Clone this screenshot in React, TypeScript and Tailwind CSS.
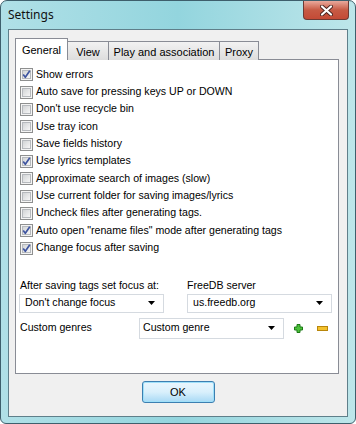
import React from 'react';

const options = [
  { label: 'Show errors', checked: true },
  { label: 'Auto save for pressing keys UP or DOWN' },
  { label: "Don't use recycle bin" },
  { label: 'Use tray icon' },
  { label: 'Save fields history' },
  { label: 'Use lyrics templates', checked: true },
  { label: 'Approximate search of images (slow)' },
  { label: 'Use current folder for saving images/lyrics' },
  { label: 'Uncheck files after generating tags.' },
  { label: 'Auto open "rename files" mode after generating tags', checked: true },
  { label: 'Change focus after saving', checked: true },
];

function CheckBox({ checked }: { checked?: boolean }) {
  return (
    <span className="relative flex h-[13px] w-[13px] shrink-0 items-center justify-center border border-[#8e8f8f] bg-[#f4f4f4]">
      <span className="h-[9px] w-[9px] border border-[#b6b9bd] bg-gradient-to-br from-[#d2d4d6] to-[#f6f6f6]" />
      {checked && (
        <svg className="absolute left-0 top-0" width="11" height="11" viewBox="0 0 11 11">
          <path d="M2.2 5.6 L4.3 8.3 L8.8 1.8" fill="none" stroke="#3f55a0" strokeWidth="1.7" strokeLinejoin="round" />
        </svg>
      )}
    </span>
  );
}

function Arrow() {
  return (
    <svg width="7" height="4" viewBox="0 0 7 4" className="shrink-0">
      <path d="M0 0 H7 L3.5 4 Z" fill="#000" />
    </svg>
  );
}

function Combo({ value, className }: { value: string; className: string }) {
  return (
    <div className={`flex w-[145px] items-center justify-between border border-[#d5dae0] bg-white pr-[8px] ${className}`}>
      <span>{value}</span>
      <Arrow />
    </div>
  );
}

export default function App() {
  const tabs = [
    { label: 'General', w: 'w-[53px]', active: true },
    { label: 'View', w: 'w-[41px]' },
    { label: 'Play and association', w: 'w-[111px]' },
    { label: 'Proxy', w: 'w-[39px]' },
  ];

  return (
    <div className="flex h-[424px] w-[356px] flex-col overflow-hidden rounded-t-[7px] rounded-b-[6px] border border-[#3e5f6c] bg-gradient-to-r from-[#b0e0e7] via-[#93d5de] to-[#bde6ea] font-['Liberation_Sans',Arial,sans-serif] text-[10.6px] text-black">
      {/* Title bar */}
      <div className="relative flex h-[28px] shrink-0 items-center pl-[7px]">
        <span className="font-['Noto_Sans',sans-serif] text-[12px] text-[#111]">Settings</span>
        <div className="absolute right-[6px] top-0 flex h-[19px] w-[46px] items-center justify-center rounded-b-[4px] border border-t-0 border-[#6d3a34] bg-gradient-to-b from-[#e9a99c] via-[#c75a44] to-[#c34a36]">
          <svg width="13" height="11" viewBox="0 0 13 11">
            <path d="M2 1.5 L11 9.5 M11 1.5 L2 9.5" stroke="#4a2520" strokeWidth="4" strokeLinecap="round" />
            <path d="M2 1.5 L11 9.5 M11 1.5 L2 9.5" stroke="#ffffff" strokeWidth="2.2" strokeLinecap="round" />
          </svg>
        </div>
      </div>

      {/* Client area */}
      <div className="mx-[7px] mb-[6px] flex flex-1 flex-col border border-[#5f7f8a] bg-[#f0f0f0] pl-[6px] pt-[8px]">
        <div className="relative z-10 -mb-px flex h-[22px] items-end">
          {tabs.map((t) =>
            t.active ? (
              <div key={t.label} className={`flex h-[22px] ${t.w} justify-center border border-b-0 border-[#898c95] bg-white pt-[3px] text-[11px]`}>
                {t.label}
              </div>
            ) : (
              <div key={t.label} className={`flex h-[19px] ${t.w} justify-center border border-l-0 border-b-0 border-[#898c95] bg-gradient-to-b from-[#f2f2f2] to-[#dddddd] pt-[2px] text-[11px]`}>
                {t.label}
              </div>
            ),
          )}
        </div>

        <div className="flex h-[315px] w-[324px] flex-col border border-[#898c95] bg-white pl-[4px] pt-[6px]">
          {options.map((o) => (
            <div key={o.label} className="flex h-[17.35px] items-center gap-[3px]">
              <CheckBox checked={o.checked} />
              <span>{o.label}</span>
            </div>
          ))}

          <div className="mt-[22px] flex h-[14px] items-center">
            <span className="w-[167px]">After saving tags set focus at:</span>
            <span>FreeDB server</span>
          </div>
          <div className="mt-[1px] flex">
            <Combo value="Don't change focus" className="-ml-px h-[19px] pl-[5px]" />
            <Combo value="us.freedb.org" className="ml-[23px] h-[19px] pl-[5px]" />
          </div>
          <div className="mt-[5px] flex items-center">
            <span className="w-[119px]">Custom genres</span>
            <Combo value="Custom genre" className="h-[21px] pl-[3px]" />
            <svg className="ml-[10px]" width="9" height="9" viewBox="0 0 9 9">
              <path d="M3 0.5 H6 V3 H8.5 V6 H6 V8.5 H3 V6 H0.5 V3 H3 Z" fill="#4cc03a" stroke="#1d7a16" strokeWidth="1" />
            </svg>
            <svg className="ml-[14px]" width="11" height="5" viewBox="0 0 11 5">
              <rect x="0.5" y="0.5" width="10" height="4" fill="#f3c12c" stroke="#b8860b" strokeWidth="1" />
            </svg>
          </div>
        </div>

        <div className="mt-[7px] flex justify-center pr-[6px]">
          <button className="h-[22px] w-[73px] rounded-[3px] border border-[#3c7fb1] bg-gradient-to-b from-[#eaf6fd] via-[#d9f0fc] to-[#a7d9f5] shadow-[inset_0_0_0_1px_#9fe0f9] text-[11px] text-black">
            OK
          </button>
        </div>
      </div>
    </div>
  );
}
